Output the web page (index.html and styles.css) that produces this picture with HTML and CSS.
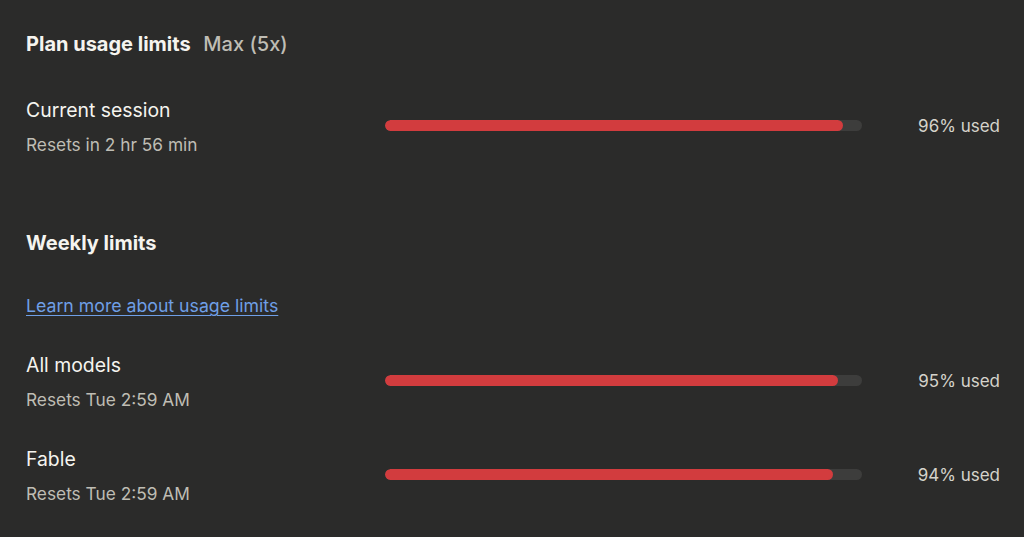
FILE: index.html
```html
<!DOCTYPE html>
<html>
    <head>
        <link rel="stylesheet" href="styles.css">
    </head>
    <body>
        <main class='usage'>
            <h2 class='heading'>Plan usage limits <span class='plan'>Max (5x)</span></h2>

            <div class='row first'>
                <div class='info'>
                    <div class='label'>Current session</div>
                    <div class='sub'>Resets in 2 hr 56 min</div>
                </div>
                <div class='track'><div class='fill' style='width: 96%'></div></div>
                <div class='pct'>96% used</div>
            </div>

            <h2 class='heading weekly'>Weekly limits</h2>
            <a class='learn' href='#'>Learn more about usage limits</a>

            <div class='row'>
                <div class='info'>
                    <div class='label'>All models</div>
                    <div class='sub'>Resets Tue 2:59 AM</div>
                </div>
                <div class='track'><div class='fill' style='width: 95%'></div></div>
                <div class='pct'>95% used</div>
            </div>

            <div class='row'>
                <div class='info'>
                    <div class='label'>Fable</div>
                    <div class='sub'>Resets Tue 2:59 AM</div>
                </div>
                <div class='track'><div class='fill' style='width: 94%'></div></div>
                <div class='pct'>94% used</div>
            </div>
        </main>
    </body>
</html>
```

FILE: styles.css
```css
body {
    margin: 0;
    background: #2b2b2a;
    color: #f5f4ef;
    font-family: 'Inter', 'Noto Sans', sans-serif;
}

.usage {
    padding: 30px 24px 0 26px;
}

.heading {
    margin: 0;
    font-size: 20px;
    line-height: 28px;
    font-weight: 700;
}

.plan {
    margin-left: 8px;
    color: #bfbdb4;
    font-weight: 500;
}

.heading.weekly {
    margin-top: 72px;
}

.learn {
    display: inline-block;
    margin-top: 37px;
    font-size: 17.7px;
    line-height: 24px;
    color: #6f9fe6;
    text-decoration: underline;
    text-underline-offset: 3px;
    text-decoration-thickness: 1px;
}

.row {
    display: grid;
    grid-template-columns: 359px 477px 1fr;
    align-items: center;
    margin-top: 33px;
}

.row.first {
    margin-top: 38px;
}

.label {
    font-size: 19.4px;
    line-height: 28px;
}

.sub {
    margin-top: 9px;
    font-size: 17.3px;
    line-height: 24px;
    color: #bfbdb4;
}

.track {
    height: 11px;
    margin-bottom: 2px;
    border-radius: 6px;
    background: #3d3d3c;
    overflow: hidden;
}

.fill {
    height: 100%;
    border-radius: 6px;
    background: #d23c3e;
}

.pct {
    margin-bottom: 1px;
    text-align: right;
    font-size: 17px;
    color: #d5d3cb;
}
```
